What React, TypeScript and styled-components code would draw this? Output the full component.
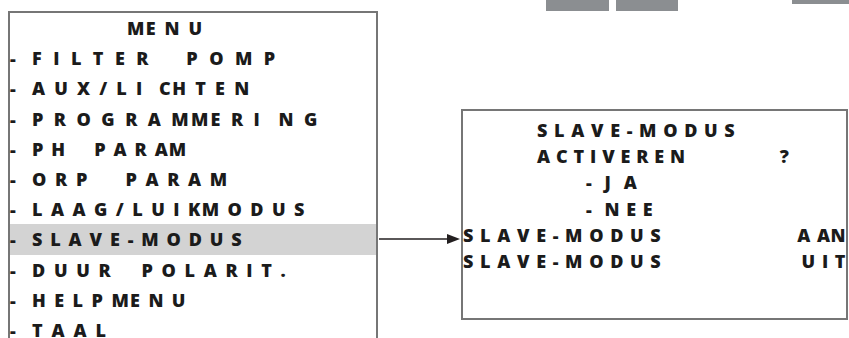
import React from "react";
import styled, { createGlobalStyle } from "styled-components";

const GlobalStyle = createGlobalStyle`
  html, body {
    margin: 0;
    padding: 0;
    background: #ffffff;
    overflow: hidden;
  }
`;

type Line = { text: string; track?: number; title?: boolean; active?: boolean };

// letter tracking varies per line, as on the original panel print
const menuLines: Line[] = [
  { text: "ME N U", title: true },
  { text: "F I L T E R    P O M P", track: 2.7 },
  { text: "A U X / L I  CH T E N", track: 1.55 },
  { text: "P R O G R A MME R I  N G", track: 2.2 },
  { text: "P H    P A R AM", track: 0.95 },
  { text: "O R P     P A R A M", track: 1.3 },
  { text: "L A A G / L U I KM O D U S", track: 1.2 },
  { text: "S L A V E - M O D U S", track: 0.9, active: true },
  { text: "D U U R    P O L A R I T .", track: 1.3 },
  { text: "H E L P ME N U", track: 1.2 },
  { text: "T A A L" },
];

const App = () => {
  return (
    <Page>
      <GlobalStyle />
      <TopStrip>
        <Bar $w={63} $h={11} />
        <Bar $w={62} $h={11} />
        <Bar $w={57} $h={4} $gap={114} />
      </TopStrip>
      <Stage>
        <MenuScreen>
          {menuLines.map((line, i) => (
            <MenuRow key={i} $active={line.active}>
              {line.title ? (
                <Title>{line.text}</Title>
              ) : (
                <>
                  <Bullet>-</Bullet>
                  <Label $track={line.track ?? 1.4}>{line.text}</Label>
                </>
              )}
            </MenuRow>
          ))}
        </MenuScreen>

        <Connector viewBox="0 0 83 12" width={83} height={12}>
          <line x1="1" y1="6" x2="71" y2="6" stroke="#231f20" strokeWidth="1.6" />
          <polygon points="69,1 82,6 69,11" fill="#231f20" />
        </Connector>

        <DetailScreen>
          <DetailRow $indent={74}>
            <span>S L A V E - M O D U S</span>
          </DetailRow>
          <DetailRow $indent={74} $trail={57} $track={0.1}>
            <span>A C T I V E R E N</span>
            <span>?</span>
          </DetailRow>
          <DetailRow $indent={123}>
            <span>-  J  A</span>
          </DetailRow>
          <DetailRow $indent={123}>
            <span>-  N E E</span>
          </DetailRow>
          <DetailRow>
            <span>S L A V E - M O D U S</span>
            <span>A AN</span>
          </DetailRow>
          <DetailRow>
            <span>S L A V E - M O D U S</span>
            <span>U I T</span>
          </DetailRow>
        </DetailScreen>
      </Stage>
    </Page>
  );
};

export default App;

const Page = styled.div`
  width: 849px;
  height: 338px;
  overflow: hidden;
  display: flex;
  flex-direction: column;
  font-family: "Open Sans", "Liberation Sans", sans-serif;
  font-weight: 800;
  font-size: 18px;
  color: #1b1b1b;
`;

const TopStrip = styled.div`
  height: 11px;
  display: flex;
  align-items: flex-start;
  gap: 7px;
  padding-left: 546px;
  flex-shrink: 0;
`;

const Bar = styled.div<{ $w: number; $h: number; $gap?: number }>`
  width: ${(p) => p.$w}px;
  height: ${(p) => p.$h}px;
  margin-left: ${(p) => (p.$gap ? p.$gap - 7 : 0)}px;
  background: #8b8e91;
`;

const Stage = styled.div`
  display: flex;
  align-items: flex-start;
  padding-left: 8px;
`;

const MenuScreen = styled.div`
  box-sizing: border-box;
  width: 370px;
  height: 345px;
  flex-shrink: 0;
  border: 2px solid #767676;
  border-bottom: none;
`;

const MenuRow = styled.div<{ $active?: boolean }>`
  height: 30.2px;
  display: flex;
  align-items: center;
  white-space: pre;
  background: ${(p) => (p.$active ? "#d3d3d3" : "transparent")};
`;

const Title = styled.span`
  padding-left: 117px;
  letter-spacing: 1.4px;
  word-spacing: 1.4px;
  line-height: 14px;
`;

const Bullet = styled.span`
  width: 22px;
  flex-shrink: 0;
  line-height: 14px;
`;

const Label = styled.span<{ $track: number }>`
  letter-spacing: ${(p) => p.$track}px;
  word-spacing: 1.4px;
  line-height: 14px;
`;

const Connector = styled.svg`
  display: block;
  flex-shrink: 0;
  margin-top: 222px;
`;

const DetailScreen = styled.div`
  box-sizing: border-box;
  width: 387px;
  height: 211px;
  margin-top: 98px;
  flex-shrink: 0;
  padding-top: 6px;
  border: 2px solid #767676;
  word-spacing: 1px;
`;

const DetailRow = styled.div<{ $indent?: number; $trail?: number; $track?: number }>`
  height: 26.2px;
  line-height: 26px;
  display: flex;
  justify-content: space-between;
  align-items: center;
  padding-left: ${(p) => p.$indent ?? 0}px;
  padding-right: ${(p) => p.$trail ?? 0}px;
  letter-spacing: ${(p) => p.$track ?? 0.5}px;
  white-space: pre;
`;
